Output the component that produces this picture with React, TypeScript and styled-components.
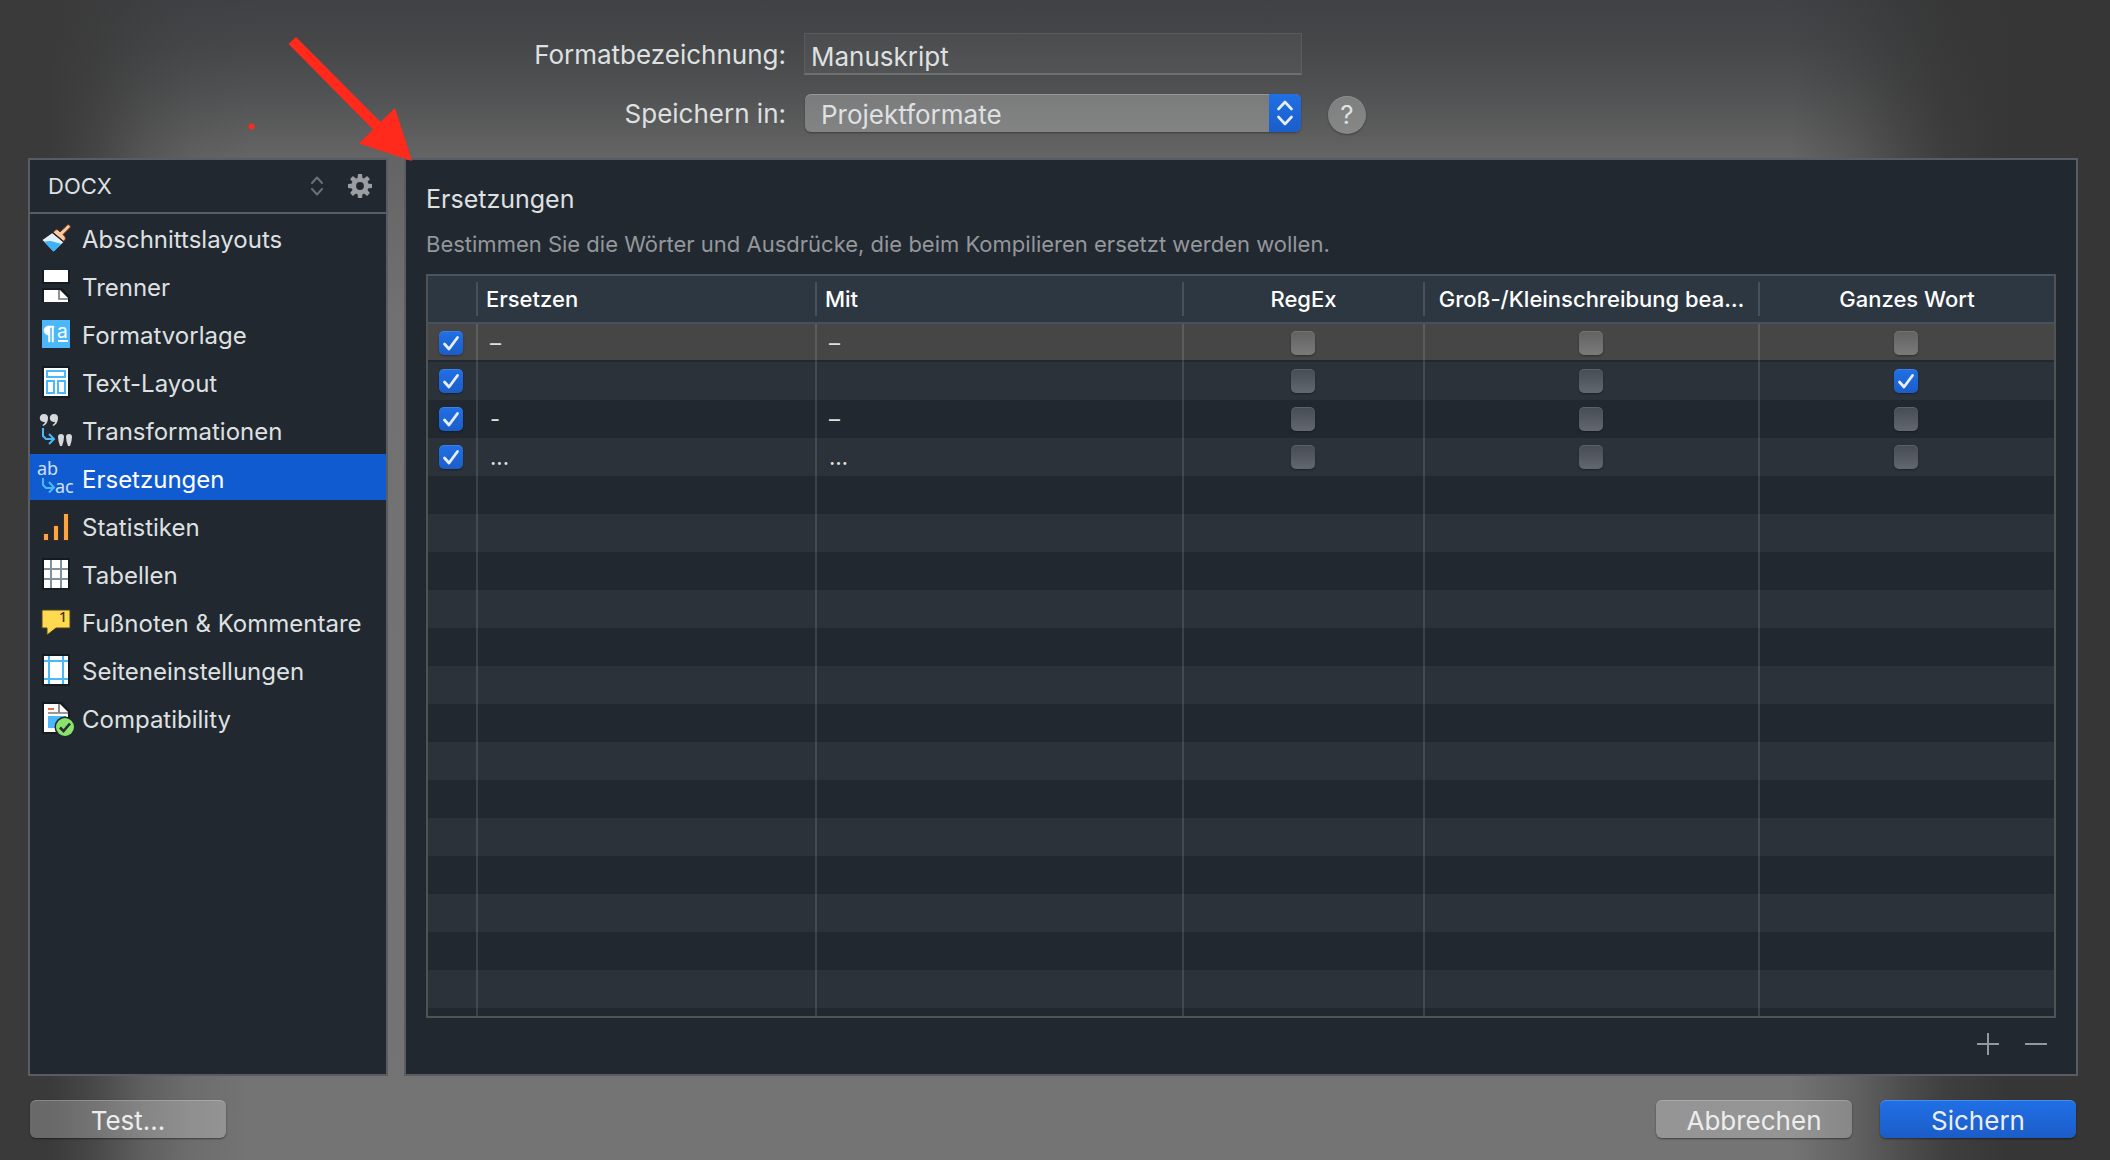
import React, { useState } from "react";
import styled, { createGlobalStyle, css } from "styled-components";

const GlobalStyle = createGlobalStyle`
  *, *::before, *::after { box-sizing: border-box; }
  body { margin: 0; background: #3a3a3a; }
  body, button, input, select {
    font-family: Inter, "Liberation Sans", sans-serif;
    color: #dfe0e1;
  }
`;

const panelBorder = "#585d63";
const panelFill = "#212830";

const Sheet = styled.div`
  position: relative;
  height: 100vh;
  min-height: 760px;
  min-width: 1100px;
  padding: 33px 32px 22px 28px;
  display: flex;
  flex-direction: column;
  background:
    linear-gradient(to right, #3a3a3a 50px, rgba(58, 58, 58, 0.75) 95px, rgba(58, 58, 58, 0.35) 145px, rgba(58, 58, 58, 0.12) 190px, rgba(58, 58, 58, 0) 250px),
    linear-gradient(to left, #363636 100px, rgba(54, 54, 54, 0.85) 165px, rgba(54, 54, 54, 0.6) 210px, rgba(54, 54, 54, 0.3) 255px, rgba(54, 54, 54, 0) 320px),
    linear-gradient(to bottom, #3f4144 0, #454749 45px, #505152 90px, #646464 156px, #717171 320px, #747474 100%);
`;

const Form = styled.form`
  display: grid;
  grid-template-columns: 1fr minmax(300px, 498px) 1fr;
  column-gap: 18px;
  row-gap: 19px;
  align-items: center;
  margin-bottom: 26px;
`;

const FieldLabel = styled.label`
  justify-self: end;
  grid-column: 1;
  padding-top: 2px;
  font-size: 26px;
  line-height: 32px;
`;

const NameInput = styled.input`
  height: 42px;
  width: 100%;
  padding: 6px 6px 0;
  font-size: 26px;
  background: rgba(255, 255, 255, 0.04);
  border: 1px solid rgba(255, 255, 255, 0.07);
  border-bottom: 2px solid #6d6f71;
  outline: none;
`;

const SelectBox = styled.div`
  position: relative;
  height: 38px;
  margin: 0 1px;
  border-radius: 6px;
  overflow: hidden;
  background: rgba(255, 255, 255, 0.24);
  box-shadow: inset 0 1px rgba(255, 255, 255, 0.2), 0 1px 2px rgba(0, 0, 0, 0.35);
`;

const LocationSelect = styled.select`
  appearance: none;
  width: 100%;
  height: 100%;
  padding: 3px 44px 0 16px;
  font-size: 26px;
  background: none;
  border: 0;
  outline: none;
`;

const SelectCap = styled.span`
  position: absolute;
  inset: 0 0 0 auto;
  width: 32px;
  display: grid;
  place-items: center;
  pointer-events: none;
  background: linear-gradient(#2070e6, #1b5dc8);
`;

const HelpButton = styled.button`
  width: 38px;
  height: 38px;
  margin: 2px 0 -2px 8px;
  padding: 0;
  border: 0;
  border-radius: 50%;
  font-size: 26px;
  line-height: 38px;
  background: rgba(255, 255, 255, 0.26);
  box-shadow: inset 0 1px rgba(255, 255, 255, 0.14), 0 1px 2px rgba(0, 0, 0, 0.35);
`;

const Panels = styled.div`
  flex: 1;
  min-height: 0;
  display: grid;
  grid-template-columns: 360px minmax(0, 1fr);
  gap: 16px;
`;

const Panel = styled.section`
  min-height: 0;
  display: flex;
  flex-direction: column;
  background: ${panelFill};
  border: 2px solid ${panelBorder};
`;

const FormatBar = styled.div`
  height: 54px;
  flex: none;
  display: flex;
  align-items: center;
  padding: 0 14px 0 18px;
  border-bottom: 2px solid ${panelBorder};
`;

const FormatPicker = styled.div`
  flex: 1;
  display: flex;
  align-items: center;
  margin-right: 25px;
`;

const FormatSelect = styled.select`
  appearance: none;
  flex: 1;
  height: 40px;
  padding: 0;
  font-size: 22px;
  background: none;
  border: 0;
  outline: none;
`;

const IconButton = styled.button`
  display: grid;
  place-items: center;
  padding: 0;
  border: 0;
  background: none;
`;

const NavList = styled.nav`
  display: flex;
  flex-direction: column;
  gap: 2px;
`;

const NavItem = styled.button<{ $active: boolean }>`
  height: 46px;
  display: flex;
  align-items: center;
  gap: 6px;
  padding: 0 0 0 8px;
  border: 0;
  text-align: left;
  background: ${(p) => (p.$active ? "#0f5bcf" : "none")};
  color: ${(p) => (p.$active ? "#ffffff" : "#dfe0e1")};
`;

const NavText = styled.span`
  padding-top: 6px;
  font-size: 24px;
  line-height: 30px;
  white-space: nowrap;
`;

const NavIcon = styled.svg`
  flex: none;
  width: 38px;
  height: 46px;
  overflow: visible;
`;

const Content = styled(Panel)`
  padding: 0 20px;
`;

const Title = styled.h1`
  margin: 22px 0 0;
  font-size: 25px;
  line-height: 34px;
  font-weight: 400;
`;

const Hint = styled.p`
  margin: 14px 0 15px;
  font-size: 22px;
  line-height: 29px;
  color: #94979b;
`;

const TableFrame = styled.div`
  flex: 1;
  min-height: 0;
  overflow: hidden;
  border: 2px solid #515353;
  border-top-color: #4a545e;
`;

const Grid = styled.table`
  width: 100%;
  table-layout: fixed;
  border-collapse: separate;
  border-spacing: 0;
`;

const HeadCell = styled.th`
  height: 48px;
  padding: 6px 0;
  background: #2d3741;
  border-bottom: 2px solid #47515c;
  color: #ffffff;
  font-size: 22px;
  font-weight: 500;
`;

const HeadText = styled.div<{ $center: boolean; $last: boolean }>`
  height: 34px;
  padding: 0 8px;
  line-height: 34px;
  white-space: nowrap;
  overflow: hidden;
  text-align: ${(p) => (p.$center ? "center" : "left")};
  ${(p) => !p.$last && css`border-right: 2px solid #47515c;`}
`;

const Row = styled.tr<{ $selected?: boolean }>`
  background: ${panelFill};
  &:nth-child(even) { background: #2b323a; }
  ${(p) => p.$selected && css`background: linear-gradient(#464646 36px, ${panelFill} 36px);`}
`;

const Cell = styled.td<{ $center?: boolean }>`
  height: 38px;
  padding: 0 12px;
  font-size: 22px;
  line-height: 30px;
  text-align: ${(p) => (p.$center ? "center" : "left")};
  border-right: 2px solid rgba(255, 255, 255, 0.12);
  &:last-child { border-right: 0; }
`;

const Tick = styled.span`
  display: grid;
  width: 24px;
  height: 24px;
  margin: 0 auto;
  & > * { grid-area: 1 / 1; }
  & > svg { pointer-events: none; }
`;

const TickInput = styled.input<{ $bright: boolean }>`
  appearance: none;
  width: 24px;
  height: 24px;
  margin: 0;
  border-radius: 5px;
  background: ${(p) => (p.$bright ? "linear-gradient(#626262, #7a7a7a)" : "linear-gradient(#464c54, #63676f)")};
  box-shadow: inset 0 1px rgba(255, 255, 255, 0.12), 0 1px 2px rgba(0, 0, 0, 0.35);
  &:checked { background: linear-gradient(#2070e6, #1b5dc8); }
`;

const TickCell = styled(Cell)`
  padding: 0 2px 0 0;
`;

const RowTools = styled.div`
  flex: none;
  height: 56px;
  display: flex;
  justify-content: flex-end;
  align-items: center;
  gap: 18px;
  padding: 0 5px 4px 0;
`;

const Actions = styled.footer`
  display: flex;
  justify-content: space-between;
  margin: 24px 0 0;
  padding: 0 2px;
`;

const ActionGroup = styled.div`
  display: flex;
  gap: 28px;
`;

const ActionButton = styled.button<{ $primary?: boolean }>`
  width: 196px;
  height: 38px;
  padding: 2px 0 0;
  border: 0;
  border-radius: 6px;
  font-size: 26px;
  color: #ededee;
  background: ${(p) => (p.$primary ? "linear-gradient(#2070e6, #1b5dc8)" : "rgba(255, 255, 255, 0.24)")};
  box-shadow: inset 0 1px rgba(255, 255, 255, 0.2), 0 1px 2px rgba(0, 0, 0, 0.45);
`;

const Pointer = styled.svg`
  position: absolute;
  top: 0;
  left: 0;
  width: 430px;
  height: 180px;
  pointer-events: none;
`;

const blue = "#4bb8fb";
const shade = "rgba(0,0,0,0.32)";

const icons: Record<string, React.ReactNode> = {
  brush: (
    <>
      <path d="M14.5 19 25.5 28 15.5 37.5 4.5 26Z" fill="#dff2fe" />
      <path d="M6 27.5 13 27 23.5 30 15.5 37.5Z" fill="#3fb1fb" />
      <path d="M15 18.500 18 15.500Q20 15 22 18L28 12.500L30 10.500Q32 10.500 32.500 13L30.500 15L25 20.500Q28 23 27.500 25L25.500 27.500Z" fill="#fac9a0" stroke="#6b3a1c" strokeWidth="1" />
      <path d="M14.500 18.500 26 28" stroke="#2b2422" strokeWidth="1.300" />
    </>
  ),
  separator: (
    <>
      <path d="M4 8H32V22H4ZM4 26H24L32 34V40H4Z" fill={shade} />
      <path d="M6 8H30V20H6ZM6 28H22L30 36V40H6Z" fill="#fff" />
      <path d="M21 28V37H30" fill="none" stroke="#777" strokeWidth="1.600" />
    </>
  ),
  styles: (
    <>
      <rect x="4" y="10" width="28" height="28" fill={blue} />
      <path d="M16 16H10.500A4.500 4.500 0 0 0 10.500 25V32H12V17.500H14V32H15.500V17.500H16Z" fill="#fff" stroke="#fff" strokeWidth="0.500" />
      <text x="19" y="28" fontSize="19" fontFamily="Inter, sans-serif" fill="#fff">a</text>
      <rect x="20" y="30" width="10" height="2" fill="#fff" />
    </>
  ),
  layout: (
    <>
      <rect x="4" y="8" width="28" height="32" fill={shade} />
      <rect x="6" y="10" width="24" height="28" fill="#fff" />
      <path d="M9 13H27V19H9ZM9 23H16V35H9ZM20 23H27V35H20Z" fill="none" stroke={blue} strokeWidth="2" />
    </>
  ),
  transform: (
    <>
      <g fill="#d6d8da">
        <path d="M6 8A4 4 0 0 1 10 12C10 16 8 19 5 20L4.500 19C6 18 7 17 7 15.800A4 4 0 1 1 6 8Z" />
        <path d="M16 8A4 4 0 0 1 20 12C20 16 18 19 15 20L14.500 19C16 18 17 17 17 15.800A4 4 0 1 1 16 8Z" />
        <path d="M23 28A3 3 0 0 1 26 31Q26 35 24 40H22Q20 35 20 31A3 3 0 0 1 23 28Z" />
        <path d="M31 28A3 3 0 0 1 34 31Q34 35 32 40H30Q28 35 28 31A3 3 0 0 1 31 28Z" />
      </g>
      <path d="M5 22V30L8 33H15.500M11 28 16 33 11 38" fill="none" stroke={blue} strokeWidth="2" />
    </>
  ),
  replace: (
    <>
      <g fontFamily='"Noto Sans", sans-serif' fontSize="18" fill="#cfe0fa">
        <text x="-1" y="21">ab</text>
        <text x="17" y="39">ac</text>
      </g>
      <path d="M5 24V31L8 34H15.500M11 28 16 33.500 11 38.500" fill="none" stroke={blue} strokeWidth="2" />
    </>
  ),
  stats: (
    <>
      <path d="M5 31H11V39H5ZM15 23H21V39H15ZM25 11H31V39H25Z" fill="#4a3118" opacity="0.600" />
      <path d="M6 32H10V38H6ZM16 24H20V38H16ZM26 12H30V38H26Z" fill="#fda341" />
    </>
  ),
  tables: (
    <>
      <rect x="4" y="8" width="28" height="32" fill={shade} />
      <rect x="6" y="10" width="24" height="28" fill="#fff" />
      <path d="M13 10V38M23 10V38M6 19H30M6 29H30" stroke="#7e919d" strokeWidth="2" />
    </>
  ),
  notes: (
    <>
      <path d="M4 12H32V30H18L9 37V30H4Z" fill="#ffd94f" stroke="#4b431f" strokeWidth="1" />
      <text x="21" y="24" fontSize="14" fontWeight="500" fontFamily='"Noto Sans", sans-serif' fill="#3a3210">1</text>
    </>
  ),
  page: (
    <>
      <rect x="4" y="8" width="28" height="32" fill={shade} />
      <rect x="6" y="10" width="24" height="28" fill="#fff" />
      <path d="M11 10V38M25 10V38M6 15H30M6 33H30" stroke={blue} strokeWidth="2" />
    </>
  ),
  compat: (
    <>
      <path d="M4 8H24L32 17V40H4Z" fill={shade} />
      <path d="M6 10H22L30 18V38H6Z" fill="#fff" />
      <path d="M21 10V19H30M10 19H20" fill="none" stroke="#777" strokeWidth="1.700" />
      <path d="M10 14H16V16H10Z" fill="#f2674a" />
      <path d="M10 22H28V34H10Z" fill={blue} />
      <circle cx="27" cy="33" r="10.500" fill={panelFill} />
      <circle cx="27" cy="33" r="9" fill="#8be36a" />
      <path d="M22 33.500 25.500 37 32 29.500" fill="none" stroke="#24303a" strokeWidth="2.600" />
    </>
  ),
};

const sections = [
  { icon: "brush", text: "Abschnittslayouts" },
  { icon: "separator", text: "Trenner" },
  { icon: "styles", text: "Formatvorlage" },
  { icon: "layout", text: "Text-Layout" },
  { icon: "transform", text: "Transformationen" },
  { icon: "replace", text: "Ersetzungen" },
  { icon: "stats", text: "Statistiken" },
  { icon: "tables", text: "Tabellen" },
  { icon: "notes", text: "Fußnoten & Kommentare" },
  { icon: "page", text: "Seiteneinstellungen" },
  { icon: "compat", text: "Compatibility" },
];

const columns = [
  { title: "", width: 50, center: false },
  { title: "Ersetzen", width: 339, center: false },
  { title: "Mit", width: 367, center: false },
  { title: "RegEx", width: 241, center: true },
  { title: "Groß-/Kleinschreibung bea…", width: 335, center: true },
  { title: "Ganzes Wort", width: 294, center: true },
];

const initialRules = [
  { find: "–", put: "–", flags: [true, false, false, false] },
  { find: "", put: "", flags: [true, false, false, true] },
  { find: "-", put: "–", flags: [true, false, false, false] },
  { find: "...", put: "…", flags: [true, false, false, false] },
];

const spareRows = Array.from({ length: 40 }, (_, i) => i);
const flagNames = ["Aktiv", "RegEx", "Groß-/Kleinschreibung beachten", "Ganzes Wort"];

function CheckBox({ name, on, bright, onToggle }: { name: string; on: boolean; bright: boolean; onToggle: () => void }) {
  return (
    <Tick>
      <TickInput type="checkbox" aria-label={name} checked={on} $bright={bright} onChange={onToggle} />
      {on && (
        <svg width="24" height="24" aria-hidden="true">
          <path d="M5.500 13 10 18 18.500 6.500" fill="none" stroke="#e6eefc" strokeWidth="2.800" strokeLinecap="round" strokeLinejoin="round" />
        </svg>
      )}
    </Tick>
  );
}

function Gear() {
  return (
    <svg width="24" height="24" viewBox="-12 -12 24 24" aria-hidden="true">
      <g fill="#9a9da1">
        {[0, 45, 90, 135].map((a) => (
          <path key={a} d="M-2 -12H2L2.600 -7V7L2 12H-2L-2.600 7V-7Z" transform={`rotate(${a})`} />
        ))}
        <circle r="8.600" />
      </g>
      <circle r="3.900" fill={panelFill} />
    </svg>
  );
}

export default function App() {
  const [active, setActive] = useState("replace");
  const [rules, setRules] = useState(initialRules);

  const toggle = (row: number, flag: number) =>
    setRules((list) =>
      list.map((rule, i) =>
        i === row ? { ...rule, flags: rule.flags.map((f, j) => (j === flag ? !f : f)) } : rule
      )
    );

  return (
    <>
      <GlobalStyle />
      <Sheet>
        <Form onSubmit={(e) => e.preventDefault()}>
          <FieldLabel htmlFor="format-name">Formatbezeichnung:</FieldLabel>
          <NameInput id="format-name" type="text" defaultValue="Manuskript" />
          <span />
          <FieldLabel htmlFor="format-location">Speichern in:</FieldLabel>
          <SelectBox>
            <LocationSelect id="format-location">
              <option>Projektformate</option>
            </LocationSelect>
            <SelectCap>
              <svg width="16" height="26" aria-hidden="true">
                <path d="M1.500 9 8 2 14.500 9M1.500 17 8 24 14.500 17" fill="none" stroke="#e6eefc" strokeWidth="2.600" strokeLinecap="round" strokeLinejoin="round" />
              </svg>
            </SelectCap>
          </SelectBox>
          <HelpButton type="button">?</HelpButton>
        </Form>

        <Panels>
          <Panel>
            <FormatBar>
              <FormatPicker>
                <FormatSelect aria-label="Ausgabeformat">
                  <option>DOCX</option>
                </FormatSelect>
                <svg width="12" height="20" aria-hidden="true">
                  <path d="M1 7 6 1.500 11 7M1 13 6 18.500 11 13" fill="none" stroke="#6b7076" strokeWidth="2" strokeLinecap="round" strokeLinejoin="round" />
                </svg>
              </FormatPicker>
              <IconButton type="button" aria-label="Optionen">
                <Gear />
              </IconButton>
            </FormatBar>
            <NavList>
              {sections.map((s) => (
                <NavItem key={s.icon} type="button" $active={s.icon === active} onClick={() => setActive(s.icon)}>
                  <NavIcon viewBox="0 0 38 46" aria-hidden="true">{icons[s.icon]}</NavIcon>
                  <NavText>{s.text}</NavText>
                </NavItem>
              ))}
            </NavList>
          </Panel>

          <Content>
            <Title>Ersetzungen</Title>
            <Hint>Bestimmen Sie die Wörter und Ausdrücke, die beim Kompilieren ersetzt werden wollen.</Hint>
            <TableFrame>
              <Grid>
                <colgroup>
                  {columns.map((c) => (
                    <col key={c.title} width={c.width} />
                  ))}
                </colgroup>
                <thead>
                  <tr>
                    {columns.map((c, i) => (
                      <HeadCell key={c.title} scope="col">
                        <HeadText $center={c.center} $last={i === columns.length - 1}>{c.title}</HeadText>
                      </HeadCell>
                    ))}
                  </tr>
                </thead>
                <tbody>
                  {rules.map((rule, r) => {
                    const box = (flag: number) => (
                      <TickCell $center>
                        <CheckBox name={flagNames[flag]} on={rule.flags[flag]} bright={r === 0} onToggle={() => toggle(r, flag)} />
                      </TickCell>
                    );
                    return (
                      <Row key={r} $selected={r === 0}>
                        {box(0)}
                        <Cell>{rule.find}</Cell>
                        <Cell>{rule.put}</Cell>
                        {box(1)}
                        {box(2)}
                        {box(3)}
                      </Row>
                    );
                  })}
                  {spareRows.map((n) => (
                    <Row key={`spare-${n}`}>
                      {columns.map((c) => (
                        <Cell key={c.title} />
                      ))}
                    </Row>
                  ))}
                </tbody>
              </Grid>
            </TableFrame>
            <RowTools>
              <IconButton type="button" aria-label="Hinzufügen">
                <svg width="30" height="30" aria-hidden="true">
                  <path d="M4 15H26M15 4V26" stroke="#94989d" strokeWidth="2" />
                </svg>
              </IconButton>
              <IconButton type="button" aria-label="Entfernen">
                <svg width="30" height="30" aria-hidden="true">
                  <path d="M4 15H26" stroke="#94989d" strokeWidth="2" />
                </svg>
              </IconButton>
            </RowTools>
          </Content>
        </Panels>

        <Actions>
          <ActionButton type="button">Test…</ActionButton>
          <ActionGroup>
            <ActionButton type="button">Abbrechen</ActionButton>
            <ActionButton type="button" $primary>Sichern</ActionButton>
          </ActionGroup>
        </Actions>

        <Pointer aria-hidden="true">
          <path d="M296 37 380.500 122 395 108 412 161 359 143.500 373 129.500 288.500 44Z" fill="#ff2a1c" />
          <circle cx="251.500" cy="126.500" r="3" fill="#ff2a1c" />
        </Pointer>
      </Sheet>
    </>
  );
}
